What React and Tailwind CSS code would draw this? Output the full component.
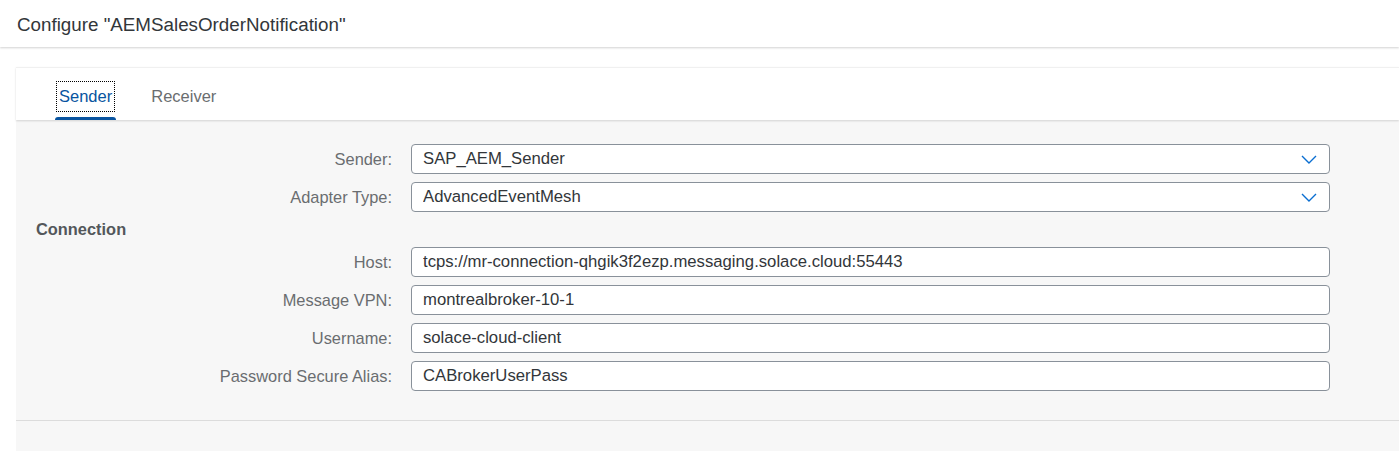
import React, { useState } from 'react';

const fields = [
    { label: 'Host:', value: 'tcps://mr-connection-qhgik3f2ezp.messaging.solace.cloud:55443' },
    { label: 'Message VPN:', value: 'montrealbroker-10-1' },
    { label: 'Username:', value: 'solace-cloud-client' },
    { label: 'Password Secure Alias:', value: 'CABrokerUserPass' },
];

const Chevron = () => (
    <svg width="16" height="9" viewBox="0 0 16 9" fill="none" className="shrink-0">
        <path d="M1 1 L8 8 L15 1" stroke="#0a6ed1" strokeWidth="1.4" />
    </svg>
);

const Row = ({ label, value, select }) => (
    <div className="flex items-center h-[30px]">
        <div className="w-[376px] text-right text-[16.4px] text-[#6a6d70]">{label}</div>
        <div className="ml-[19px] w-[919px] h-[30px] bg-white border border-[#89919a] rounded-[4px] flex items-center pl-[11px] pr-[12px]">
            <span className="flex-1 text-[16.7px] text-[#32363a] truncate">{value}</span>
            {select && <Chevron />}
        </div>
    </div>
);

export default function App() {
    const [tab, setTab] = useState('sender');

    return (
        <div className="w-[1399px] h-[451px] bg-white overflow-hidden" style={{ fontFamily: '"Liberation Sans", Arial, sans-serif' }}>
            {/* Header */}
            <div className="h-[47px] flex items-center pl-[17px] pt-[3px] text-[18.8px] text-[#32363a] shadow-[0_1px_2px_rgba(0,0,0,0.18)] relative z-10">
                Configure "AEMSalesOrderNotification"
            </div>

            <div className="pl-[16px]">
                <div className="h-[20px]" />
                <div className="border-t border-[#f0f0f0] bg-white h-[53px] flex items-end pl-[39px] gap-[35px] shadow-[0_1px_2px_rgba(0,0,0,0.15)] relative z-10">
                    <button
                        onClick={() => setTab('sender')}
                        className="relative h-full flex items-center pt-[5px] px-[4px]"
                    >
                        <span className={`text-[16.5px] ${tab === 'sender' ? 'text-[#0854a0] outline-1 outline-dotted outline-black outline-offset-[2px]' : 'text-[#6a6d70]'}`}>Sender</span>
                        {tab === 'sender' && <span className="absolute left-0 right-0 bottom-0 h-[3px] bg-[#0854a0] rounded-t-[3px]" />}
                    </button>
                    <button
                        onClick={() => setTab('receiver')}
                        className="relative h-full flex items-center pt-[5px]"
                    >
                        <span className={`text-[16.5px] ${tab === 'receiver' ? 'text-[#0854a0]' : 'text-[#6a6d70]'}`}>Receiver</span>
                        {tab === 'receiver' && <span className="absolute left-0 right-0 bottom-0 h-[3px] bg-[#0854a0] rounded-t-[3px]" />}
                    </button>
                </div>

                <div className="bg-[#f7f7f7] h-[331px]">
                    <div className="pt-[24px] flex flex-col gap-[8px]">
                        <Row label="Sender:" value="SAP_AEM_Sender" select />
                        <Row label="Adapter Type:" value="AdvancedEventMesh" select />
                    </div>
                    <div className="h-[35px] flex items-center pl-[20px] text-[16.4px] font-bold text-[#53575b]">Connection</div>
                    <div className="flex flex-col gap-[8px]">
                        {fields.map((f) => (
                            <Row key={f.label} label={f.label} value={f.value} />
                        ))}
                    </div>
                    <div className="mt-[29px] border-t border-[#dcdcdc]" />
                </div>
            </div>
        </div>
    );
}
